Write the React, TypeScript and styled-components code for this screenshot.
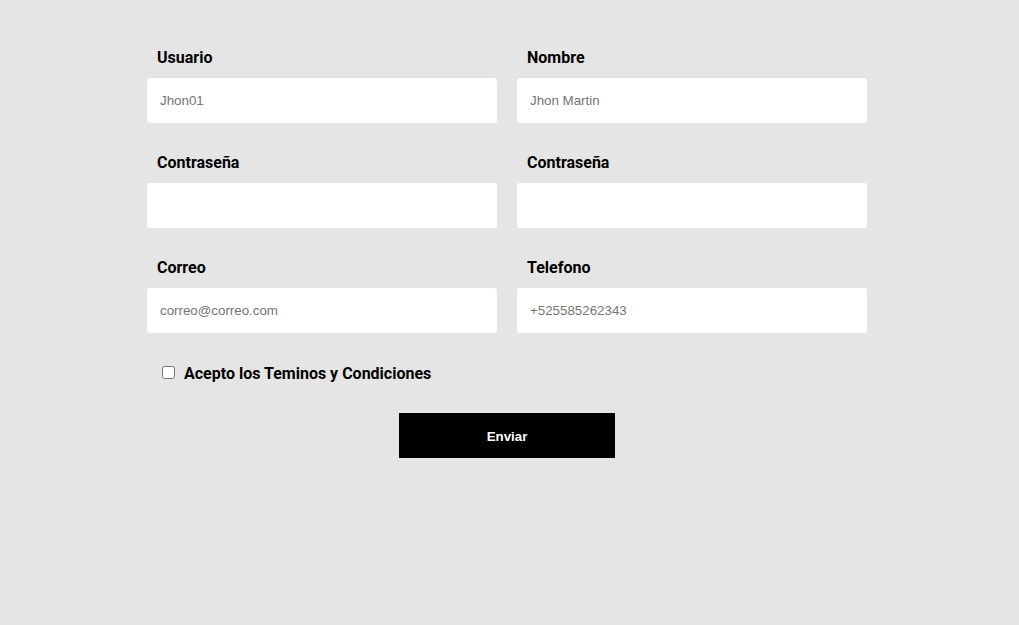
import React from "react";
import styled, { createGlobalStyle } from "styled-components";

const Global = createGlobalStyle`
  html, body { margin: 0; padding: 0; background: #e5e5e5; }
  body { font-family: Roboto, "Liberation Sans", sans-serif; }
`;

const Page = styled.div`
  width: 1019px;
  height: 625px;
  background: #e5e5e5;
`;

const Form = styled.form`
  width: 720px;
  margin-left: 147px;
  padding-top: 48px;
  display: flex;
  flex-direction: column;
`;

const Grid = styled.div`
  display: grid;
  grid-template-columns: 350px 350px;
  column-gap: 20px;
  row-gap: 30px;
`;

const Field = styled.div`
  display: flex;
  flex-direction: column;
`;

const Label = styled.label`
  font-size: 16px;
  font-weight: 700;
  line-height: 20px;
  color: #000;
  padding-left: 10px;
  margin-bottom: 10px;
`;

const Input = styled.input`
  height: 45px;
  box-sizing: border-box;
  border: none;
  border-radius: 3px;
  background: #fff;
  padding: 0 13px;
  font-family: "Liberation Sans", Arial, sans-serif;
  font-size: 13.333px;
  color: #000;
  outline: none;
  &::placeholder { color: #757575; }
`;

const CheckRow = styled.label`
  display: flex;
  align-items: center;
  margin-top: 30px;
  padding-left: 15px;
  height: 20px;
  font-size: 16px;
  font-weight: 700;
  color: #000;
  gap: 9px;
`;

const Check = styled.input`
  width: 13px;
  height: 13px;
  margin: 0 0 1px 0;
`;

const ButtonRow = styled.div`
  display: flex;
  justify-content: center;
  margin-top: 30px;
`;

const Submit = styled.button`
  width: 216px;
  height: 45px;
  padding: 2px 0 0;
  background: #000;
  color: #fff;
  border: none;
  font-family: "Liberation Sans", Arial, sans-serif;
  font-size: 13.333px;
  font-weight: 700;
  cursor: pointer;
`;

const fields = [
  { label: "Usuario", placeholder: "Jhon01", type: "text" },
  { label: "Nombre", placeholder: "Jhon Martin", type: "text" },
  { label: "Contraseña", placeholder: "", type: "password" },
  { label: "Contraseña", placeholder: "", type: "password" },
  { label: "Correo", placeholder: "correo@correo.com", type: "email" },
  { label: "Telefono", placeholder: "+525585262343", type: "tel" },
];

export default function App() {
  return (
    <Page>
      <Global />
      <Form onSubmit={(e) => e.preventDefault()}>
        <Grid>
          {fields.map((f, i) => (
            <Field key={i}>
              <Label htmlFor={`f${i}`}>{f.label}</Label>
              <Input id={`f${i}`} type={f.type} placeholder={f.placeholder} />
            </Field>
          ))}
        </Grid>
        <CheckRow>
          <Check type="checkbox" />
          Acepto los Teminos y Condiciones
        </CheckRow>
        <ButtonRow>
          <Submit type="submit">Enviar</Submit>
        </ButtonRow>
      </Form>
    </Page>
  );
}
